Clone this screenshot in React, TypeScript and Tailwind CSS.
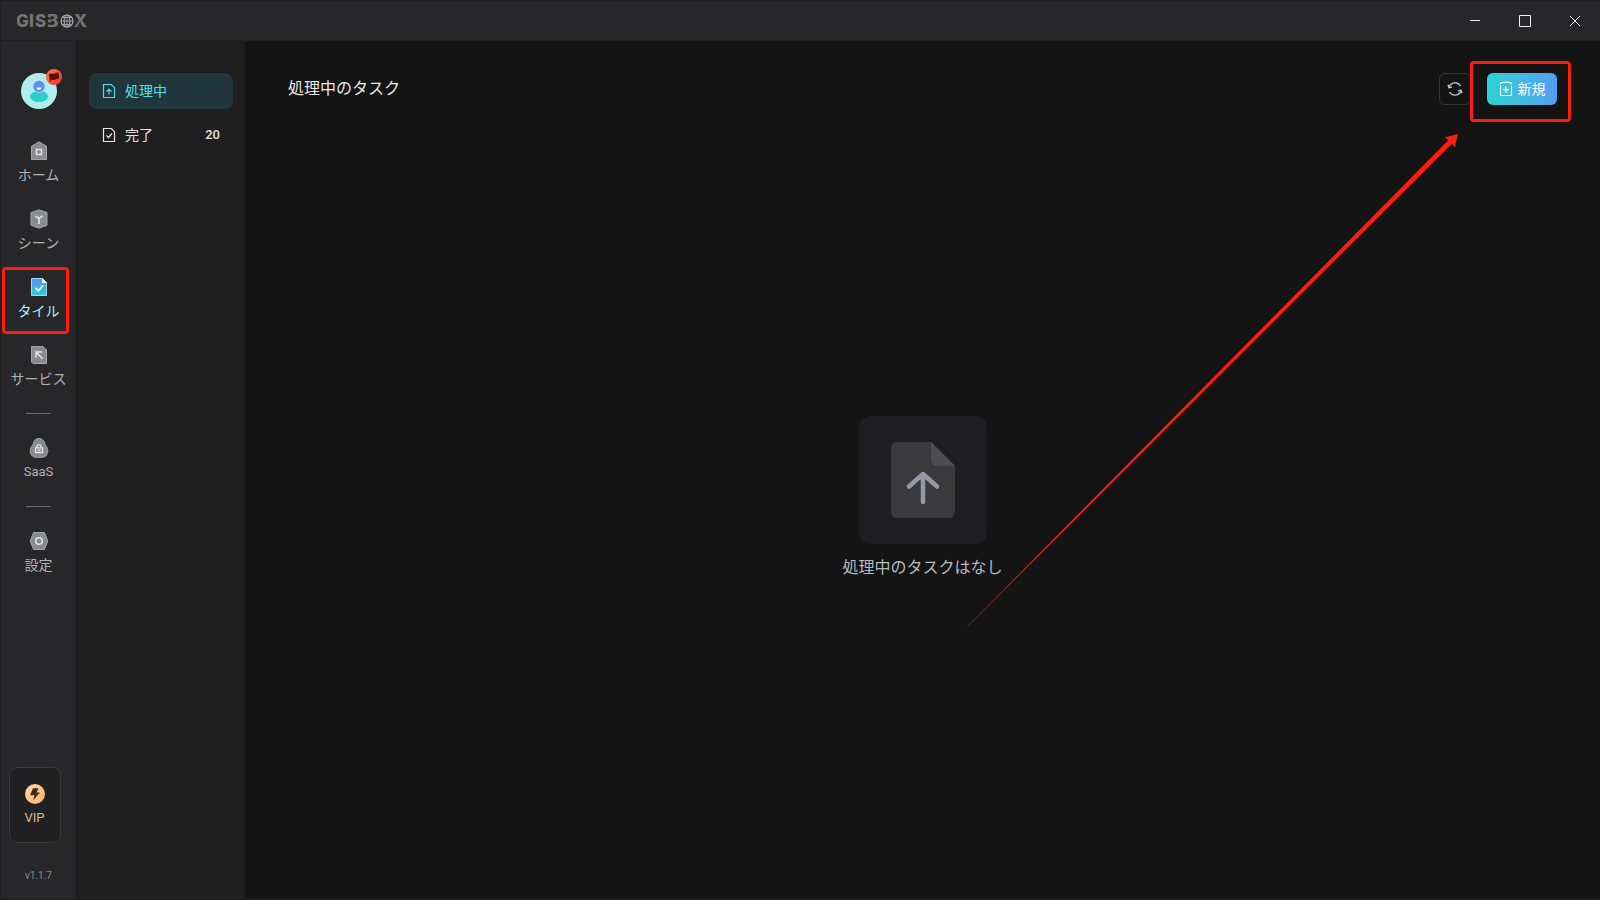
import type { ReactNode } from "react";

type RailItem = { label: string; icon: ReactNode; active?: boolean; latin?: boolean };

const MAIN_ITEMS: RailItem[] = [
  { label: "ホーム", icon: <HomeIcon /> },
  { label: "シーン", icon: <SceneIcon /> },
  { label: "タイル", icon: <TileIcon />, active: true },
  { label: "サービス", icon: <ServiceIcon /> },
];

export default function App() {
  return (
    <div className="min-h-screen flex flex-col bg-[#141414] border-l border-b border-[#202022] font-['Roboto','Noto_Sans_CJK_JP',sans-serif] text-[#d8d8da]">
      <TitleBar />
      <div className="flex flex-1">
        <Rail />
        <TaskNav />
        <TaskPanel />
      </div>
    </div>
  );
}

function TitleBar() {
  return (
    <header className="h-[41px] flex items-center justify-between bg-[#27272a] border-t border-b border-[#202022] pl-4">
      <Logo />
      <div className="flex h-full text-[#f2f2f2]">
        <button aria-label="最小化" className="w-[50px] flex items-center justify-center">
          <svg width="12" height="12" viewBox="0 0 12 12" stroke="currentColor">
            <path d="M1 5.5h10" />
          </svg>
        </button>
        <button aria-label="最大化" className="w-[50px] flex items-center justify-center">
          <svg width="12" height="12" viewBox="0 0 12 12" fill="none" stroke="currentColor">
            <path d="M.5.5h11v11H.5z" />
          </svg>
        </button>
        <button aria-label="閉じる" className="w-[50px] flex items-center justify-center">
          <svg width="12" height="12" viewBox="0 0 12 12" stroke="currentColor">
            <path d="M1 1l10 10M11 1L1 11" />
          </svg>
        </button>
      </div>
    </header>
  );
}

function Rail() {
  return (
    <aside className="w-[76px] shrink-0 flex flex-col items-center bg-[#27272a] border-r border-[#151515] pt-8">
      <button aria-label="アカウント" className="relative">
        <Avatar />
        <span className="absolute -top-1 -right-[5px]">
          <FlagBadge />
        </span>
      </button>

      <nav className="w-full mt-8 flex flex-col items-center gap-6">
        {MAIN_ITEMS.map((item) => (
          <RailButton key={item.label} {...item} />
        ))}
        <hr className="w-[25px] border-[#6d6d70]" />
        <RailButton label="SaaS" icon={<SaasIcon />} latin />
        <hr className="w-[25px] border-[#6d6d70]" />
        <RailButton label="設定" icon={<SettingsIcon />} />
      </nav>

      <button className="mt-auto mr-2 w-[52px] h-[76px] pt-0.5 flex flex-col items-center justify-center gap-1 rounded-lg border border-[#40362d] bg-[#212124]">
        <BoltIcon />
        <span className="text-[13px] leading-5 text-[#dcb583]">VIP</span>
      </button>
      <p className="mt-[23px] mb-[13px] text-[10px] leading-5 text-[#85898f]">v1.1.7</p>
    </aside>
  );
}

function RailButton({ label, icon, active, latin }: RailItem) {
  return (
    <button
      className={`relative w-full flex flex-col items-center gap-1 whitespace-nowrap leading-5 ${
        active ? "text-[#a5f4f2]" : "text-[#b1b2b5]"
      } ${latin ? "text-[13px]" : "text-sm"}`}
    >
      {icon}
      <span>{label}</span>
      {active && (
        <span className="absolute -top-[10px] left-px w-[67px] h-[67px] rounded-sm border-3 border-[#fc1d10]" />
      )}
    </button>
  );
}

function TaskNav() {
  return (
    <nav className="w-[168px] shrink-0 flex flex-col gap-2 bg-[#1f1f1f] px-3 pt-8 text-sm">
      <button className="h-9 flex items-center gap-[9px] rounded-lg bg-[#21363c] px-[13px] text-[#45e3e6]">
        <FileIcon kind="up" />
        処理中
      </button>
      <button className="h-9 flex items-center gap-[9px] px-[13px] text-[#e3e3e5]">
        <FileIcon kind="check" />
        完了
        <span className="ml-auto text-[13px] font-medium">20</span>
      </button>
    </nav>
  );
}

function TaskPanel() {
  return (
    <main className="relative flex-1 flex flex-col">
      <div className="flex items-center justify-between px-[43px] pt-8">
        <h1 className="text-base leading-6 text-[#e8e8ea]">処理中のタスク</h1>
        <div className="flex items-center gap-4">
          <button
            aria-label="更新"
            className="size-8 flex items-center justify-center rounded-md border border-[#333335] text-[#c4c6cb]"
          >
            <RefreshIcon />
          </button>
          <button className="relative w-[70px] h-8 flex items-center justify-center gap-[5px] rounded-md bg-linear-to-r from-[#25d2d3] to-[#549df0] text-sm text-white">
            <NewIcon />
            新規
            <span className="absolute -top-3 -left-[17px] w-[101px] h-[61px] rounded-sm border-3 border-[#fc1d10]" />
          </button>
        </div>
      </div>

      <div className="flex-1 flex flex-col items-center justify-center pb-2">
        <div className="size-32 flex items-center justify-center rounded-xl bg-[#1e1e20]">
          <svg width="64" height="76" viewBox="0 0 64 76" fill="none">
            <path d="M6 0h34l24 24v46a6 6 0 0 1-6 6H6a6 6 0 0 1-6-6V6a6 6 0 0 1 6-6z" fill="#3a3a3c" />
            <path d="M40 0l24 24H46a6 6 0 0 1-6-6z" fill="#4d4d51" />
            <path d="M32 60V32M18 44.500l14-12.500 14 12.500" stroke="#9498a3" strokeWidth="4.500" strokeLinecap="round" strokeLinejoin="round" />
          </svg>
        </div>
        <p className="mt-3 text-base leading-6 text-[#b7b9be]">処理中のタスクはなし</p>
      </div>

      {/* pointer towards the 新規 button */}
      <svg
        className="absolute top-[89px] right-[139px] pointer-events-none"
        width="494"
        height="500"
        viewBox="0 0 494 500"
      >
        <defs>
          <linearGradient id="pointer" gradientUnits="userSpaceOnUse" x1="0" y1="497" x2="100" y2="396">
            <stop offset="0" stopColor="#fc1d10" stopOpacity="0.4" />
            <stop offset="1" stopColor="#fc1d10" />
          </linearGradient>
        </defs>
        <path d="M0 496.500L481.500 10L477.500 7.500L491 4L487.500 17.500L485 13.500L0.600 497.100z" fill="url(#pointer)" />
      </svg>
    </main>
  );
}

/* ---------- icons ---------- */

function Logo() {
  return (
    <svg width="72" height="18" viewBox="0 0 72 18" role="img" aria-label="GISBOX">
      <g fill="#747476" fontFamily="Inter, sans-serif" fontSize="17" fontWeight="800">
        <text x="-1" y="15">G</text>
        <text x="12" y="15">I</text>
        <text x="18" y="15">S</text>
        <text x="30" y="15">B</text>
        <text x="57" y="15">X</text>
      </g>
      <path d="M30 6.500h6M30 11.500h6" stroke="#27272a" strokeWidth="2" />
      <path d="M60.500 14.500l3-4.500" stroke="#27272a" strokeWidth="1.200" />
      <g fill="none" stroke="#a6a6a8" strokeWidth="1.200">
        <circle cx="50" cy="9" r="6" />
        <ellipse cx="50" cy="9" rx="2.800" ry="6" />
        <path d="M44 9h12M50 3v12M45.500 5.500h9M45.500 12.500h9" strokeWidth="0.900" />
      </g>
    </svg>
  );
}

function Avatar() {
  return (
    <svg width="36" height="36" viewBox="0 0 36 36">
      <circle cx="18" cy="18" r="18" fill="#b2ecec" />
      <ellipse cx="18" cy="23.500" rx="9" ry="5.500" fill="#2accce" />
      <circle cx="18" cy="13.500" r="6.300" fill="#b2ecec" />
      <circle cx="18" cy="13.500" r="5.700" fill="#5b8df5" />
      <path d="M15.500 14.500h5a2.500 2.500 0 0 1-5 0z" fill="#fff" />
    </svg>
  );
}

function FlagBadge() {
  return (
    <svg width="16" height="16" viewBox="0 0 16 16">
      <defs>
        <linearGradient id="flag" x1="0" y1="0" x2="1" y2="1">
          <stop stopColor="#ff7a52" />
          <stop offset="1" stopColor="#fb2e20" />
        </linearGradient>
      </defs>
      <circle cx="8" cy="8" r="8" fill="url(#flag)" />
      <path d="M3 5c1.800-.9 3.200.2 4.800-.3S10.800 3.200 12.500 3.500l.7 6.300c-1.600-.4-3 .4-4.500.9s-2.600-.2-3.700.1l.2 1.700H4z" fill="#571108" />
    </svg>
  );
}

function HomeIcon() {
  return (
    <svg width="20" height="20" viewBox="0 0 20 20" fill="none">
      <path d="M2.500 5.200L10 .8l7.500 4.400v13.300h-15z" fill="#8a8b8e" stroke="#a3a4a7" />
      <path d="M7.500 8.500h5v5h-5z" stroke="#e4e4e6" strokeWidth="1.600" />
    </svg>
  );
}

function SceneIcon() {
  return (
    <svg width="20" height="20" viewBox="0 0 20 20" fill="none">
      <path d="M10 .8l8 2.700v12.800l-8 2.900-8-2.900V3.500z" fill="#8a8b8e" stroke="#a3a4a7" strokeLinejoin="round" />
      <path d="M6.500 7L10 9.500 13.500 7M10 9.500v5.500" stroke="#e4e4e6" strokeWidth="1.600" />
    </svg>
  );
}

function TileIcon() {
  return (
    <svg width="20" height="20" viewBox="0 0 20 20" fill="none">
      <defs>
        <linearGradient id="tile" x1="0" y1="0" x2="0" y2="1">
          <stop stopColor="#5b90f5" />
          <stop offset="1" stopColor="#2bcdda" />
        </linearGradient>
      </defs>
      <path d="M2.500 1.500h11l4 4v13h-15z" fill="url(#tile)" stroke="#9adcf2" />
      <path d="M13 1l5 5h-5z" fill="#e9fbff" />
      <path d="M6.500 11l3 2.800 4.500-5.500" stroke="#fff" strokeWidth="1.800" />
    </svg>
  );
}

function ServiceIcon() {
  return (
    <svg width="20" height="20" viewBox="0 0 20 20" fill="none">
      <path d="M2.500 1.500H14l3.500 3.500v13.500H4l-1.500-1.500z" fill="#8a8b8e" stroke="#a3a4a7" />
      <path d="M7 12.500V7h6M7.200 7.200l6.300 6.500" stroke="#e4e4e6" strokeWidth="1.500" />
    </svg>
  );
}

function SaasIcon() {
  return (
    <svg width="20" height="20" viewBox="0 0 20 20" fill="none">
      <path d="M10 .5c3 0 5 1.800 5.600 4.700.2 1 .8 1.900 1.600 2.900 3.200 4.500 1.400 11.200-4.200 11.200H7C1.400 19.300-.4 12.600 2.800 8.100c.8-1 1.400-1.900 1.600-2.900C5 2.300 7 .5 10 .5z" fill="#8a8b8e" stroke="#a3a4a7" />
      <path d="M6.500 9.800h7v4.700h-7zM8 9.500V8.600a2 2 0 0 1 4 0v.9M8.500 12.200h3" stroke="#e4e4e6" strokeWidth="1.300" />
    </svg>
  );
}

function SettingsIcon() {
  return (
    <svg width="20" height="20" viewBox="0 0 20 20" fill="none">
      <path d="M4.500 1.500h11L18.800 10l-3.300 8.500h-11L1.200 10z" fill="#8a8b8e" stroke="#a3a4a7" />
      <circle cx="10" cy="10" r="3.300" stroke="#e4e4e6" strokeWidth="1.600" />
    </svg>
  );
}

function BoltIcon() {
  return (
    <svg width="20" height="20" viewBox="0 0 20 20">
      <defs>
        <linearGradient id="bolt" x1="0" y1="0" x2="1" y2="1">
          <stop stopColor="#ffdba8" />
          <stop offset="1" stopColor="#fbb06b" />
        </linearGradient>
      </defs>
      <circle cx="10" cy="10" r="10" fill="url(#bolt)" />
      <path d="M8 4.200h5.500l-2 4.300H15L8.300 16.200l1.200-5H5z" fill="#3f2b16" />
    </svg>
  );
}

function FileIcon({ kind }: { kind: "up" | "check" }) {
  return (
    <svg width="14" height="16" viewBox="0 0 14 16" fill="none" stroke="currentColor" strokeWidth="1.200">
      <path d="M1.500 1.500h7.800l3.200 3.200v9.800h-11z" />
      {kind === "up" ? <path d="M7 11.500V6.300M4.500 8.500L7 6.200l2.500 2.300" /> : <path d="M4.300 8.300l2.200 2.200 3.500-4" />}
    </svg>
  );
}

function RefreshIcon() {
  return (
    <svg width="16" height="16" viewBox="0 0 16 16" fill="none" stroke="currentColor" strokeWidth="1.300">
      <path d="M2 6.500A6.300 6.300 0 0 1 13.500 5M14 9.500A6.300 6.300 0 0 1 2.500 11" />
      <path d="M1 3.800l1 2.900 3-.6M15 12.200l-1-2.900-3 .6" />
    </svg>
  );
}

function NewIcon() {
  return (
    <svg width="14" height="16" viewBox="0 0 14 16" fill="none" stroke="currentColor" strokeWidth="1.200">
      <path d="M1.500 4.500v10h11v-10M.8 2.500C3 1.800 5 1.200 7 1.200s4 .6 6.200 1.300M7 5.500v6.500M4 8.700h6" />
    </svg>
  );
}
